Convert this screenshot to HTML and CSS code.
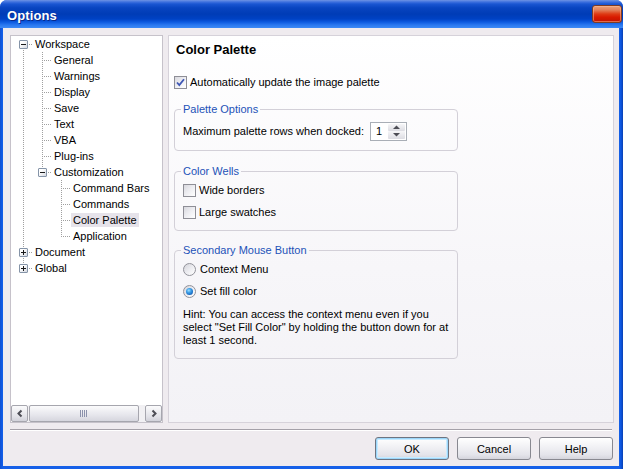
FILE: index.html
```html
<!DOCTYPE html>
<html>
<head>
<meta charset="utf-8">
<link rel="stylesheet" href="styles.css">
</head>
<body>
<div class="window">
  <div class="titlebar">
    <span class="title">Options</span>
    <span class="close"></span>
  </div>
  <div class="client">
    <div class="panes">
      <div class="tree-pane">
        <div class="tree">
          <div class="row"><span class="c bd"><span class="box"><svg width="7" height="7" viewBox="0 0 7 7"><path d="M1 3.5h5" stroke="#1a1a1a"/></svg></span><i class="hl short"></i></span><span class="lbl">Workspace</span></div>
          <div class="row"><span class="c v"></span><span class="c v"><i class="hl"></i></span><span class="lbl">General</span></div>
          <div class="row"><span class="c v"></span><span class="c v"><i class="hl"></i></span><span class="lbl">Warnings</span></div>
          <div class="row"><span class="c v"></span><span class="c v"><i class="hl"></i></span><span class="lbl">Display</span></div>
          <div class="row"><span class="c v"></span><span class="c v"><i class="hl"></i></span><span class="lbl">Save</span></div>
          <div class="row"><span class="c v"></span><span class="c v"><i class="hl"></i></span><span class="lbl">Text</span></div>
          <div class="row"><span class="c v"></span><span class="c v"><i class="hl"></i></span><span class="lbl">VBA</span></div>
          <div class="row"><span class="c v"></span><span class="c v"><i class="hl"></i></span><span class="lbl">Plug-ins</span></div>
          <div class="row"><span class="c v"></span><span class="c tl"><span class="box"><svg width="7" height="7" viewBox="0 0 7 7"><path d="M1 3.5h5" stroke="#1a1a1a"/></svg></span><i class="hl short"></i></span><span class="lbl">Customization</span></div>
          <div class="row"><span class="c v"></span><span class="c"></span><span class="c v"><i class="hl"></i></span><span class="lbl">Command Bars</span></div>
          <div class="row"><span class="c v"></span><span class="c"></span><span class="c v"><i class="hl"></i></span><span class="lbl">Commands</span></div>
          <div class="row"><span class="c v"></span><span class="c"></span><span class="c v"><i class="hl"></i></span><span class="lbl sel">Color Palette</span></div>
          <div class="row"><span class="c v"></span><span class="c"></span><span class="c tl"><i class="hl"></i></span><span class="lbl">Application</span></div>
          <div class="row"><span class="c v"><span class="box"><svg width="7" height="7" viewBox="0 0 7 7"><path d="M1 3.5h5M3.5 1v5" stroke="#1a1a1a"/></svg></span><i class="hl short"></i></span><span class="lbl">Document</span></div>
          <div class="row"><span class="c tl"><span class="box"><svg width="7" height="7" viewBox="0 0 7 7"><path d="M1 3.5h5M3.5 1v5" stroke="#1a1a1a"/></svg></span><i class="hl short"></i></span><span class="lbl">Global</span></div>
        </div>
        <div class="hscroll">
          <span class="sbtn"><svg width="8" height="9" viewBox="0 0 8 9"><path d="M5.5 1.5L2.5 4.5L5.5 7.5" fill="none" stroke="#4d4d55" stroke-width="2"/></svg></span>
          <span class="track"><span class="thumb"><svg width="9" height="7" viewBox="0 0 9 7"><path d="M0.5 0v7M2.5 0v7M4.5 0v7M6.5 0v7" stroke="#8c92ac"/></svg></span></span>
          <span class="sbtn"><svg width="8" height="9" viewBox="0 0 8 9"><path d="M2.5 1.5L5.5 4.5L2.5 7.5" fill="none" stroke="#4d4d55" stroke-width="2"/></svg></span>
        </div>
      </div>
      <div class="page">
        <div class="heading">Color Palette</div>
        <div class="check-row top-check">
          <span class="cb"><svg width="11" height="11" viewBox="0 0 11 11"><path d="M2 5.5L4.3 8L9 2.2" fill="none" stroke="#3f57b4" stroke-width="1.8"/></svg></span>
          <span>Automatically update the image palette</span>
        </div>
        <fieldset class="group g1">
          <legend>Palette Options</legend>
          <div class="spin-row">
            <span>Maximum palette rows when docked:</span>
            <span class="spin">
              <span class="spin-val">1</span>
              <span class="spin-btns">
                <span class="sb"><svg width="7" height="4" viewBox="0 0 7 4"><path d="M0 4L3.5 0.5L7 4z" fill="#4d4d55"/></svg></span>
                <span class="sb"><svg width="7" height="4" viewBox="0 0 7 4"><path d="M0 0L3.5 3.5L7 0z" fill="#4d4d55"/></svg></span>
              </span>
            </span>
          </div>
        </fieldset>
        <fieldset class="group g2">
          <legend>Color Wells</legend>
          <div class="check-row opt"><span class="cb"></span><span>Wide borders</span></div>
          <div class="check-row opt"><span class="cb"></span><span>Large swatches</span></div>
        </fieldset>
        <fieldset class="group g3">
          <legend>Secondary Mouse Button</legend>
          <div class="check-row opt"><span class="rb"></span><span>Context Menu</span></div>
          <div class="check-row opt"><span class="rb on"><span class="dot"></span></span><span>Set fill color</span></div>
          <p class="hint">Hint: You can access the context menu even if you<br>select "Set Fill Color" by holding the button down for at<br>least 1 second.</p>
        </fieldset>
      </div>
    </div>
    <div class="sep"></div>
    <div class="buttons">
      <button class="btn default">OK</button>
      <button class="btn">Cancel</button>
      <button class="btn">Help</button>
    </div>
  </div>
</div>
</body>
</html>
```

FILE: styles.css
```css
html, body {
  margin: 0;
  padding: 0;
  background: #ffffff;
}
body {
  width: 623px;
  height: 469px;
  overflow: hidden;
  font-family: "Liberation Sans", Arial, sans-serif;
  font-size: 11px;
  color: #000;
}
.window {
  width: 623px;
  height: 469px;
  display: flex;
  flex-direction: column;
  background: linear-gradient(to right, #1a4fc8 0, #0b55e0 1px, #1660e8 3px, #1660e8 619px, #0b55e0 621px, #0a3fb0 623px);
  border-radius: 7px 7px 0 0;
  box-sizing: border-box;
}
.titlebar {
  height: 28px;
  flex: none;
  display: flex;
  align-items: flex-start;
  justify-content: space-between;
  border-radius: 7px 7px 0 0;
  background: linear-gradient(#6f93e4 0, #3d70de 2px, #1a56d2 4px, #0844c0 8px, #003cb6 14px, #0042c4 19px, #0d5ae0 22px, #2a78f0 25px, #3d8af6 28px);
}
.title {
  color: #fff;
  font-weight: bold;
  font-size: 13px;
  line-height: 16px;
  margin: 8px 0 0 7px;
  text-shadow: 1px 1px 0 #0b2a8a;
  letter-spacing: 0.1px;
}
.close {
  width: 30px;
  height: 18px;
  margin: 5px 1px 0 0;
  box-sizing: border-box;
  border: 1px solid #7d3c24;
  border-radius: 3px;
  background: linear-gradient(#eaa27a 0, #e2805a 25%, #de3a14 50%, #d81a00 70%, #c01400 100%);
  box-shadow: inset 0 0 0 1px rgba(255, 190, 150, 0.5);
}
.client {
  flex: 1;
  margin: 0 4px 3px 3px;
  background: #efebef;
  display: flex;
  flex-direction: column;
  padding: 7px 5px 0 7px;
}
.panes {
  display: flex;
  gap: 5px;
  height: 388px;
  flex: none;
}
.tree-pane {
  width: 153px;
  box-sizing: border-box;
  border: 1px solid #c6c2ca;
  background: #fff;
  display: flex;
  flex-direction: column;
}
.tree {
  flex: 1;
  padding-left: 3px;
}
.row {
  display: flex;
  align-items: center;
  height: 16px;
}
.c {
  width: 19px;
  height: 16px;
  flex: none;
  display: flex;
  align-items: flex-start;
}
.c.v {
  background: linear-gradient(#a0a0a0 50%, transparent 50%) 9px 0 / 1px 2px repeat-y;
}
.c.tl {
  background:
    linear-gradient(#fff, #fff) 9px 9px / 1px 7px no-repeat,
    linear-gradient(#a0a0a0 50%, transparent 50%) 9px 0 / 1px 2px repeat-y;
}
.c.bd {
  background:
    linear-gradient(#fff, #fff) 9px 0 / 1px 8px no-repeat,
    linear-gradient(#a0a0a0 50%, transparent 50%) 9px 0 / 1px 2px repeat-y;
}
.hl {
  display: block;
  width: 9px;
  height: 1px;
  margin: 8px 0 0 auto;
  background: linear-gradient(to right, transparent 50%, #a0a0a0 50%) 0 0 / 2px 1px repeat-x;
}
.hl.short {
  width: 5px;
  margin-left: 0;
}
.box {
  width: 9px;
  height: 9px;
  box-sizing: border-box;
  margin: 4px 0 0 5px;
  border: 1px solid #8594a8;
  border-radius: 1px;
  background: linear-gradient(135deg, #ffffff 30%, #d4d8e0 100%);
  display: flex;
  align-items: center;
  justify-content: center;
  flex: none;
}
.box svg { display: block; }
.lbl {
  padding: 0 2px;
  line-height: 14px;
  white-space: nowrap;
}
.lbl.sel {
  background: #e6e3ea;
}
.hscroll {
  display: flex;
  height: 17px;
  flex: none;
}
.sbtn {
  width: 17px;
  height: 17px;
  box-sizing: border-box;
  border: 1px solid #a6a6ae;
  border-radius: 2px;
  background: linear-gradient(#fbfbfc, #e2e2e8 70%, #d2d2da);
  display: flex;
  align-items: center;
  justify-content: center;
  flex: none;
}
.sbtn svg { display: block; }
.track {
  flex: 1;
  display: flex;
  background: #f1f0f3;
  padding-left: 1px;
}
.thumb {
  width: 110px;
  height: 17px;
  box-sizing: border-box;
  border: 1px solid #a6a6ae;
  border-radius: 2px;
  background: linear-gradient(#fbfbfc, #e6e6ec 60%, #d6d6de);
  display: flex;
  align-items: center;
  justify-content: center;
}
.thumb svg { display: block; }
.page {
  flex: 1;
  box-sizing: border-box;
  border: 1px solid #d6d2da;
  background: linear-gradient(#ffffff, #f7f6f9 60%, #f3f2f6);
  padding: 6px 0 0 5px;
}
.heading {
  font-weight: bold;
  font-size: 13px;
  line-height: 16px;
  padding-left: 2px;
}
.check-row {
  display: flex;
  align-items: center;
  gap: 3px;
  white-space: nowrap;
}
.top-check {
  height: 16px;
  margin-top: 16px;
}
.cb {
  width: 13px;
  height: 13px;
  box-sizing: border-box;
  border: 1px solid #8e8e96;
  background: linear-gradient(135deg, #d8d8de 0%, #eeeef2 50%, #ffffff 100%);
  display: flex;
  align-items: center;
  justify-content: center;
  flex: none;
}
.cb svg { display: block; }
.rb {
  width: 13px;
  height: 13px;
  box-sizing: border-box;
  border: 1px solid #92929a;
  border-radius: 50%;
  background: linear-gradient(135deg, #d4d4da 0%, #ececf0 50%, #ffffff 100%);
  display: flex;
  align-items: center;
  justify-content: center;
  flex: none;
}
.rb .dot {
  width: 7px;
  height: 7px;
  border-radius: 50%;
  background: radial-gradient(circle at 40% 35%, #9fe0ff 0, #3ea0e8 35%, #0f5cb8 80%, #0a4a9a 100%);
}
.group {
  width: 284px;
  box-sizing: border-box;
  margin: 0;
  padding: 0 8px;
  border: 1px solid #d3d0d8;
  border-radius: 4px;
  min-width: 0;
}
.group legend {
  color: #2352b8;
  line-height: 14px;
  padding: 0 2px;
  margin-left: -2px;
}
.g1 { margin-top: 12px; padding-bottom: 9px; }
.g2 { margin-top: 13px; padding-bottom: 7px; }
.g3 { margin-top: 12px; padding-bottom: 11px; }
.spin-row {
  display: flex;
  align-items: center;
  height: 20px;
  margin-top: 5px;
  white-space: nowrap;
}
.spin {
  margin-left: 6px;
  width: 37px;
  height: 19px;
  box-sizing: border-box;
  border: 1px solid #a9aeb6;
  background: #fff;
  display: flex;
}
.spin-val {
  flex: 1;
  padding-left: 5px;
  line-height: 17px;
}
.spin-btns {
  width: 17px;
  display: flex;
  flex-direction: column;
  padding: 1px 1px 1px 0;
  gap: 0;
}
.sb {
  flex: 1;
  display: flex;
  align-items: center;
  justify-content: center;
  background: linear-gradient(#f6f6f8, #dcdce2);
  border-radius: 1px;
}
.sb svg { display: block; }
.opt {
  height: 22px;
}
.g2 .opt:first-of-type, .g3 .opt:first-of-type {
  margin-top: 1px;
}
.g3 .opt { gap: 4px; }
.hint {
  margin: 6px 0 0 0;
  line-height: 13px;
  white-space: nowrap;
}
.sep {
  margin: 6px 2px 0 0;
  height: 1px;
  background: #a4a0a8;
  box-shadow: 0 1px 0 #ffffff;
  flex: none;
}
.buttons {
  display: flex;
  justify-content: flex-end;
  gap: 8px;
  margin-top: 7px;
  padding-right: 1px;
}
.btn {
  width: 74px;
  height: 23px;
  box-sizing: border-box;
  border: 1px solid #888890;
  border-radius: 3px;
  background: linear-gradient(#ffffff, #f2f2f5 40%, #e4e4ea 80%, #d4d4dc);
  font-family: "Liberation Sans", Arial, sans-serif;
  font-size: 11px;
  color: #000;
  padding: 0;
}
.btn.default {
  border-color: #6e7480;
  box-shadow: inset 0 0 0 1px #9cd6fa, inset 0 0 0 2px #c8ebff;
}
```
